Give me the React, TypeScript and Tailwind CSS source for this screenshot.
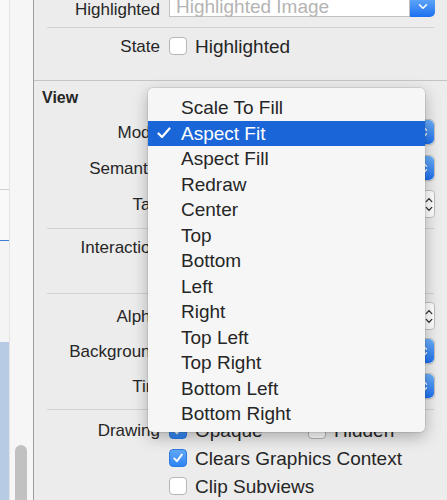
import React from 'react';
import clsx from 'clsx';

const modes = [
  'Scale To Fill',
  'Aspect Fit',
  'Aspect Fill',
  'Redraw',
  'Center',
  'Top',
  'Bottom',
  'Left',
  'Right',
  'Top Left',
  'Top Right',
  'Bottom Left',
  'Bottom Right',
];

const Checkbox: React.FC<{ checked?: boolean }> = ({ checked }) =>
  checked ? (
    <span className="w-[18px] h-[18px] shrink-0 rounded-[4px] bg-linear-to-b from-[#62a8f8] to-[#2c83f2] border border-[#2b79e2] flex items-center justify-center">
      <svg width="12" height="12" viewBox="0 0 12 12">
        <path d="M2.2 6.4 L4.9 9.2 L9.8 2.6" stroke="white" strokeWidth="1.9" fill="none" strokeLinecap="round" strokeLinejoin="round" />
      </svg>
    </span>
  ) : (
    <span className="w-[18px] h-[18px] shrink-0 rounded-[4px] bg-white border border-[#b6b6b6]" />
  );

const CheckItem: React.FC<{ checked?: boolean; label: string; className?: string }> = ({ checked, label, className }) => (
  <div className={clsx('flex items-center gap-[8px]', className)}>
    <Checkbox checked={checked} />
    <span className="text-[19px] leading-none text-[#262626]">{label}</span>
  </div>
);

// blue end cap of a pop up button
const BlueCap: React.FC = () => (
  <span className="w-[20px] h-full shrink-0 rounded-r-[5px] bg-linear-to-b from-[#6cb0f9] to-[#1b6ff0] flex items-center justify-center">
    <svg width="8" height="14" viewBox="0 0 8 14">
      <path d="M1.5 5.2 L4 2.6 L6.5 5.2 M1.5 8.8 L4 11.4 L6.5 8.8" stroke="white" strokeWidth="1.4" fill="none" strokeLinecap="round" strokeLinejoin="round" />
    </svg>
  </span>
);

const Popup: React.FC<{ value: string }> = ({ value }) => (
  <div className="w-[266px] h-[26px] flex rounded-[5px] bg-white border border-[#c2c2c2] shadow-[0_1px_1px_rgba(0,0,0,0.08)]">
    <span className="flex-1 pl-[8px] text-[19px] leading-[24px] text-[#262626]">{value}</span>
    <BlueCap />
  </div>
);

const Stepper: React.FC = () => (
  <span className="w-[13px] h-[28px] shrink-0 rounded-[4px] bg-white border border-[#c2c2c2] flex flex-col items-center justify-center gap-[3px]">
    <svg width="8" height="6" viewBox="0 0 8 6">
      <path d="M1.2 4.6 L4 1.6 L6.8 4.6" stroke="#333" strokeWidth="1.3" fill="none" strokeLinecap="round" />
    </svg>
    <svg width="8" height="6" viewBox="0 0 8 6">
      <path d="M1.2 1.4 L4 4.4 L6.8 1.4" stroke="#333" strokeWidth="1.3" fill="none" strokeLinecap="round" />
    </svg>
  </span>
);

const Field: React.FC<{ value: string }> = ({ value }) => (
  <div className="w-[266px] flex items-center gap-[4px]">
    <span className="flex-1 h-[22px] bg-white border border-[#c2c2c2] pl-[6px] text-[19px] leading-[20px] text-[#262626]">{value}</span>
    <Stepper />
  </div>
);

const Row: React.FC<{ label?: string; className: string; children?: React.ReactNode }> = ({ label, className, children }) => (
  <div className={clsx('flex items-center', className)}>
    <span className="w-[126px] shrink-0 text-right text-[17px] leading-none text-[#262626]">{label}</span>
    <div className="ml-[9px] flex items-center">{children}</div>
  </div>
);

const Sep: React.FC = () => <div className="h-[1px] mx-[13px] bg-[#d2d2d2]" />;

const App: React.FC = () => {
  return (
    <div className="relative w-[447px] h-[500px] overflow-hidden flex bg-[#ececec] font-['Liberation_Sans',Arial,sans-serif] text-[#262626]">
      {/* navigator strip */}
      <div className="w-[9px] shrink-0 flex flex-col bg-[#f9f9f9]">
        <div className="h-[189px]" />
        <div className="h-[1px] bg-[#d0d0d0]" />
        <div className="h-[50px]" />
        <div className="h-[1px] bg-[#3d7fd0]" />
        <div className="h-[101px] bg-[#f4f4f4]" />
        <div className="flex-1 bg-[#b7cbe4]" />
      </div>

      {/* scroll track */}
      <div className="w-[24px] shrink-0 bg-[#f6f6f6] border-l border-[#e4e4e4] pt-[445px]">
        <div className="ml-[5px] w-[12px] h-[80px] rounded-full bg-[#c1c1c1]" />
      </div>
      <div className="w-[1px] shrink-0 bg-[#9c9c9c]" />

      {/* inspector */}
      <div className="flex-1 flex flex-col">
        <div className="h-[22px] -mt-[5px] flex items-end">
          <span className="w-[126px] shrink-0 -mb-[1px] text-right text-[17px] leading-none">Highlighted</span>
          <div className="ml-[9px] w-[266px] h-[22px] flex">
            <span className="flex-1 bg-white border border-[#c2c2c2] pl-[6px] pt-[1px] text-[19px] leading-[20px] text-[#b4b4b4]">Highlighted Image</span>
            <span className="w-[25px] h-full rounded-r-[5px] bg-linear-to-b from-[#6cb0f9] to-[#1b6ff0] flex items-center justify-center">
              <svg width="10" height="7" viewBox="0 0 10 7">
                <path d="M1.5 1.8 L5 5.2 L8.5 1.8" stroke="white" strokeWidth="1.6" fill="none" strokeLinecap="round" strokeLinejoin="round" />
              </svg>
            </span>
          </div>
        </div>
        <div className="h-[10px]" />
        <Sep />
        <Row label="State" className="h-[36px]">
          <CheckItem label="Highlighted" />
        </Row>
        <div className="h-[16px]" />
        <div className="h-[1px] bg-[#c4c4c4]" />

        <div className="h-[33px] flex items-center pl-[8px] text-[16px] font-bold">View</div>
        <Row label="Mode" className="h-[36px]">
          <Popup value="Aspect Fit" />
        </Row>
        <Row label="Semantic" className="h-[36px]">
          <Popup value="Unspecified" />
        </Row>
        <Row label="Tag" className="h-[36px]">
          <Field value="0" />
        </Row>
        <div className="h-[6px]" />
        <Sep />
        <Row label="Interaction" className="h-[36px]">
          <CheckItem checked label="User Interaction Enabled" />
        </Row>
        <Row className="h-[28px]">
          <CheckItem label="Multiple Touch" />
        </Row>
        <Sep />
        <div className="h-[4px]" />
        <Row label="Alpha" className="h-[36px]">
          <Field value="1" />
        </Row>
        <Row label="Background" className="h-[34px]">
          <Popup value="Default" />
        </Row>
        <Row label="Tint" className="h-[36px]">
          <Popup value="Default" />
        </Row>
        <div className="h-[5px]" />
        <Sep />
        <div className="h-[6px]" />
        <Row label="Drawing" className="h-[28px]">
          <CheckItem checked label="Opaque" className="w-[139px]" />
          <CheckItem label="Hidden" />
        </Row>
        <Row className="h-[28px]">
          <CheckItem checked label="Clears Graphics Context" />
        </Row>
        <Row className="h-[28px]">
          <CheckItem label="Clip Subviews" />
        </Row>
      </div>

      {/* open content mode menu */}
      <div className="absolute left-[148px] top-[88px] w-[277px] rounded-[5px] bg-[#f6f6f6] pt-[7px] pb-[5px] shadow-[0_5px_16px_rgba(0,0,0,0.28),0_0_0_1px_rgba(0,0,0,0.08)]">
        {modes.map((m) => {
          const sel = m === 'Aspect Fit';
          return (
            <div
              key={m}
              className={clsx('h-[25.5px] flex items-center text-[19px] leading-none', sel ? 'bg-[#1a66d8] text-white' : 'text-[#262626]')}
            >
              <span className="w-[33px] pl-[9px] flex items-center">
                {sel && (
                  <svg width="14" height="12" viewBox="0 0 14 12">
                    <path d="M1.5 6.5 L5 10 L12.5 1.5" stroke="white" strokeWidth="2.2" fill="none" strokeLinecap="round" strokeLinejoin="round" />
                  </svg>
                )}
              </span>
              {m}
            </div>
          );
        })}
      </div>
    </div>
  );
};

export default App;
